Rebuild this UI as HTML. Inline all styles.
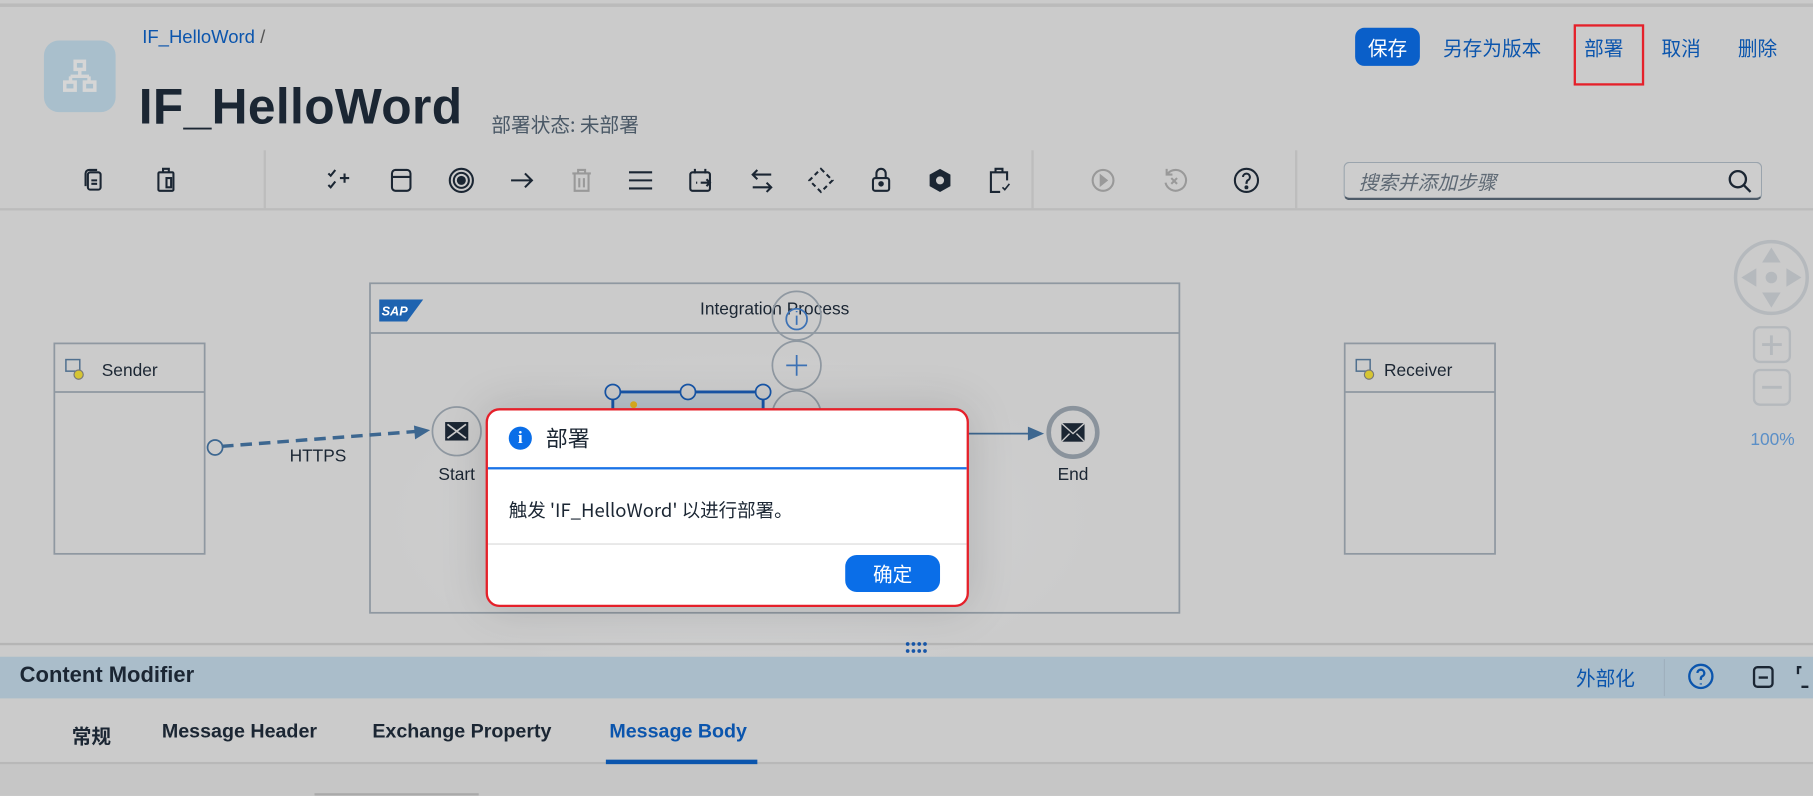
<!DOCTYPE html>
<html><head><meta charset="utf-8"><style>
html,body{margin:0;padding:0;width:1813px;height:796px;overflow:hidden;background:#cbcbcb}
#w{position:absolute;left:0;top:0;width:1568px;height:688px;transform:scale(1.15625);transform-origin:0 0;font-family:"Liberation Sans","Noto Sans CJK SC",sans-serif;background:#cbcbcb}
.a{position:absolute;white-space:nowrap}
.cn{font-family:"Noto Sans CJK SC","Liberation Sans",sans-serif}
.hl{position:absolute;left:0;width:1568px;height:2px;background:#bcbcbc}
.vl{position:absolute;width:2px;background:#bdbdbd}
.lnk{color:#0b55ad;font-size:17px}
</style></head><body><div id="w">
<div class="hl" style="top:3px;height:3px;background:#bbb"></div>
<div class="a" style="left:38px;top:35px;width:62px;height:62px;border-radius:13px;background:#a9bfcc"></div>
<svg class="a" style="left:53px;top:50px" width="32" height="32" viewBox="0 0 32 32" fill="none" stroke="#d6d6d6" stroke-width="3"><rect x="12" y="3" width="8" height="7"/><path d="M16 10v6M8 16h16M8 16v5M24 16v5"/><rect x="3" y="21" width="9" height="7"/><rect x="20" y="21" width="9" height="7"/></svg>
<div class="a" style="left:123px;top:24px;font-size:16px;color:#0b55ad">IF_HelloWord <span style="color:#555">/</span></div>
<div class="a" style="left:120px;top:69px;font-size:43px;font-weight:bold;color:#1b2633;letter-spacing:0.3px">IF_HelloWord</div>
<div class="a cn" style="left:425px;top:94px;font-size:17px;color:#4a5866">部署状态: 未部署</div>
<div class="a cn" style="left:1172px;top:24px;width:56px;height:33px;border-radius:8px;background:#0a5fc9;color:#fff;font-size:17px;line-height:33px;text-align:center">保存</div>
<div class="a cn lnk" style="left:1248px;top:28px">另存为版本</div>
<div class="a cn lnk" style="left:1370px;top:28px">部署</div>
<div class="a cn lnk" style="left:1437px;top:28px">取消</div>
<div class="a cn lnk" style="left:1503px;top:28px">删除</div>
<div class="a" style="left:1361px;top:21px;width:57px;height:49px;border:2px solid #e5202a"></div>
<div class="hl" style="top:180px"></div>
<div class="vl" style="left:228px;top:130px;height:50px"></div>
<div class="vl" style="left:892px;top:130px;height:50px"></div>
<div class="vl" style="left:1120px;top:130px;height:50px"></div>
<svg class="a" style="left:0;top:130px" width="1160" height="50" fill="none" stroke="#1b2633" stroke-width="1.8">
<g transform="translate(82,26)"><rect x="-6" y="-7" width="11" height="15" rx="2"/><path d="M-8 5v-11a3 3 0 0 1 3-3h7"/><path d="M-3 0h5M-3 3h5"/></g>
<g transform="translate(144,26)"><rect x="-7" y="-7" width="13" height="16" rx="1"/><path d="M-3-7v-3h5v3"/><rect x="0" y="-2" width="4" height="8"/></g>
<g transform="translate(293,26)"><path d="M-9-6l2 2 4-5M-9 4l2 2 4-5M1-2h8M5-6v8"/></g>
<g transform="translate(347,26)"><rect x="-8" y="-9" width="16" height="18" rx="3"/><path d="M-8-3h16"/></g>
<g transform="translate(399,26)"><circle r="10"/><circle r="6.5"/><circle r="3" fill="#1b2633"/></g>
<g transform="translate(451,26)"><path d="M-9 0h17M3-6l6 6-6 6"/></g>
<g transform="translate(503,26)" stroke="#999"><path d="M-8-6h16M-3-6v-3h6v3M-6-6v15h12v-15M-2-2v8M2-2v8"/></g>
<g transform="translate(554,26)"><path d="M-10-7h20M-10 0h20M-10 7h20"/></g>
<g transform="translate(606,26)"><rect x="-9" y="-7" width="17" height="16" rx="2"/><path d="M-5-10v4M4-10v4M-4 2h1M0 2h8M5-1l3 3-3 3"/></g>
<g transform="translate(659,26)"><path d="M8-5h-16M-4-9l-4 4 4 4M-8 6h16M4 2l4 4-4 4"/></g>
<g transform="translate(710,26)"><path d="M0-10l10 10-10 10-10-10z" stroke-dasharray="4 3"/></g>
<g transform="translate(762,26)"><rect x="-7" y="-2" width="14" height="11" rx="2"/><path d="M-4-2v-4a4 4 0 0 1 8 0v4"/><circle cy="3" r="1.5" fill="#1b2633"/></g>
<g transform="translate(813,26)" fill="#1b2633" stroke="none"><path d="M0-10l9 5v10l-9 5-9-5v-10z"/><circle r="3.5" fill="#cbcbcb"/></g>
<g transform="translate(864,26)"><path d="M-3-7h-4v17h8M3-7h4v7M-3-7v-3h6v3z"/><path d="M3 6l2 2 4-5" stroke-width="1.4"/></g>
<g transform="translate(954,26)" stroke="#999"><circle r="9"/><path d="M-2-4v8l5-4z" fill="#999"/></g>
<g transform="translate(1016,26)" stroke="#999"><path d="M-6-6a9 9 0 1 1-2 8M-7-10v5h5M-3-2l5 5M2-2l-5 5"/></g>
<g transform="translate(1078,26)"><circle r="10"/><path d="M-3-3a3 3 0 1 1 4 3c-1 1-1 2-1 3"/><circle cy="6" r="0.8" fill="#1b2633"/></g>
</svg>
<div class="a" style="left:1162px;top:140px;width:360px;height:30px;border:1px solid #9aa4ad;border-bottom:2px solid #4e5b68;border-radius:5px;background:#cdcdcd"></div>
<div class="a cn" style="left:1175px;top:144px;font-size:17px;font-style:italic;color:#5e6974">搜索并添加步骤</div>
<svg class="a" style="left:1494px;top:146px" width="22" height="22" fill="none" stroke="#1b2633" stroke-width="2"><circle cx="9" cy="9" r="7"/><path d="M14 14l6 6"/></svg>

<div class="a" style="left:330px;top:300px;width:620px;height:300px;background:radial-gradient(ellipse at center,#d3d4d6 0%,#cbcbcb 70%)"></div>
<svg class="a" style="left:0;top:180px" width="1568" height="380" fill="none">
<rect x="320" y="65" width="700" height="285" stroke="#8f98a1" stroke-width="1.5"/>
<path d="M320 108h700" stroke="#8f98a1" stroke-width="1.5"/>
<path d="M328 79h38l-14 19h-24z" fill="#1e63b0"/>
<text x="330" y="93" font-size="11" font-weight="bold" font-style="italic" fill="#fff" font-family="Liberation Sans">SAP</text>
<text x="670" y="92" font-size="15" fill="#1b2633" text-anchor="middle" font-family="Liberation Sans">Integration Process</text>
<rect x="47" y="117" width="130" height="182" stroke="#8f98a1" stroke-width="1.5"/><path d="M47 159h130" stroke="#8f98a1" stroke-width="1.5"/>
<rect x="1163" y="117" width="130" height="182" stroke="#8f98a1" stroke-width="1.5"/><path d="M1163 159h130" stroke="#8f98a1" stroke-width="1.5"/>
<g stroke="#50708f" stroke-width="1.3"><rect x="57" y="131" width="12" height="10"/><rect x="1173" y="131" width="12" height="10"/></g>
<circle cx="68" cy="144" r="4" fill="#d6c532" stroke="#777"/><circle cx="1184" cy="144" r="4" fill="#d6c532" stroke="#777"/>
<text x="88" y="145" font-size="15" fill="#1b2633" font-family="Liberation Sans">Sender</text>
<text x="1197" y="145" font-size="15" fill="#1b2633" font-family="Liberation Sans">Receiver</text>
<path d="M192 206L362 193" stroke="#3d6790" stroke-width="3" stroke-dasharray="10 6"/>
<path d="M358 188l14 4-13 8z" fill="#3d6790"/>
<circle cx="186" cy="207" r="6.5" fill="#cbcbcb" stroke="#3d6790" stroke-width="1.5"/>
<text x="275" y="219" font-size="15" fill="#1b2633" text-anchor="middle" font-family="Liberation Sans">HTTPS</text>
<circle cx="395" cy="193" r="21" fill="#cbcbcb" stroke="#8f98a1" stroke-width="1.5"/>
<rect x="385" y="185" width="20" height="16" fill="#1b2633"/><path d="M387 187l16 12M403 187l-16 12" stroke="#cbcbcb" stroke-width="1.5"/>
<text x="395" y="235" font-size="15" fill="#1b2633" text-anchor="middle" font-family="Liberation Sans">Start</text>
<path d="M836 195h60" stroke="#3d6790" stroke-width="1.5"/><path d="M889 189l14 6-14 6z" fill="#3d6790"/>
<circle cx="928" cy="194" r="21" fill="#cbcbcb" stroke="#8a939c" stroke-width="4"/>
<rect x="918" y="186" width="20" height="16" fill="#1b2633"/><path d="M918 186l10 9 10-9M918 202l7-7M938 202l-7-7" stroke="#cbcbcb" stroke-width="1.2"/>
<text x="928" y="235" font-size="15" fill="#1b2633" text-anchor="middle" font-family="Liberation Sans">End</text>
<g stroke="#8f98a1" stroke-width="1.5"><circle cx="689" cy="93" r="21"/><circle cx="689" cy="136" r="21"/><circle cx="689" cy="179" r="21"/></g>
<circle cx="689" cy="96" r="9" stroke="#3d72b5" stroke-width="1.5"/><path d="M689 93v8M689 89v1" stroke="#3d72b5" stroke-width="1.5"/>
<path d="M680 136h18M689 127v18" stroke="#3d72b5" stroke-width="1.5"/>
<rect x="530" y="159" width="130" height="30" fill="#b9c3cb"/>
<path d="M530 159h130M530 159v30M660 159v30" stroke="#1756a8" stroke-width="2.5"/>
<g fill="#cbcbcb" stroke="#1756a8" stroke-width="1.5"><circle cx="530" cy="159" r="6.5"/><circle cx="595" cy="159" r="6.5"/><circle cx="660" cy="159" r="6.5"/></g>
<circle cx="548" cy="170" r="3" fill="#e0b020"/>
<circle cx="1532" cy="60" r="31" stroke="#b5b9bd" stroke-width="3"/>
<g fill="#b5b9bd"><path d="M1532 34l8 13h-16zM1532 86l8-13h-16zM1506 60l13-8v16zM1558 60l-13-8v16z"/><circle cx="1532" cy="60" r="5"/></g>
<rect x="1517" y="103" width="31" height="30" rx="5" stroke="#b5b9bd" stroke-width="2"/><path d="M1524 118h17M1532 110v17" stroke="#b5b9bd" stroke-width="2.5"/>
<rect x="1517" y="140" width="31" height="30" rx="5" stroke="#b5b9bd" stroke-width="2"/><path d="M1524 155h17" stroke="#b5b9bd" stroke-width="2.5"/>
<text x="1533" y="205" font-size="15" fill="#5b8fc7" text-anchor="middle" font-family="Liberation Sans">100%</text>
</svg>
<div class="hl" style="top:556px;height:2px;background:#b5b5b5"></div>
<svg class="a" style="left:782px;top:553px" width="22" height="14" fill="#1756a8"><circle cx="3" cy="4" r="1.6"/><circle cx="8" cy="4" r="1.6"/><circle cx="13" cy="4" r="1.6"/><circle cx="18" cy="4" r="1.6"/><circle cx="3" cy="10" r="1.6"/><circle cx="8" cy="10" r="1.6"/><circle cx="13" cy="10" r="1.6"/><circle cx="18" cy="10" r="1.6"/></svg>
<div class="a" style="left:0;top:568px;width:1568px;height:36px;background:#aabdca"></div>
<div class="a" style="left:17px;top:574px;font-size:19px;font-weight:bold;color:#1b2633">Content Modifier</div>
<div class="a cn" style="left:1363px;top:573px;font-size:17px;color:#0b55ad">外部化</div>
<div class="vl" style="left:1439px;top:570px;height:32px;width:1px;background:#9fb0bd"></div>
<svg class="a" style="left:1458px;top:573px" width="110" height="26" fill="none" stroke="#0b55ad" stroke-width="2"><circle cx="13" cy="12" r="10"/><path d="M10 9a3 3 0 1 1 4 3c-1 .6-1 1.5-1 3M13 18v1"/><rect x="59" y="4" width="16" height="17" rx="3" stroke="#1b2633"/><path d="M63 13h8" stroke="#1b2633"/><path d="M100 4h-3v6M100 21h6" stroke="#1b2633"/></svg>
<div class="a cn" style="left:62px;top:623px;font-size:17px;font-weight:bold;color:#1b2633">常规</div>
<div class="a" style="left:140px;top:623px;font-size:17px;font-weight:bold;color:#1b2633">Message Header</div>
<div class="a" style="left:322px;top:623px;font-size:17px;font-weight:bold;color:#1b2633">Exchange Property</div>
<div class="a" style="left:527px;top:623px;font-size:17px;font-weight:bold;color:#0b55ad">Message Body</div>
<div class="hl" style="top:659px;height:2px;background:#b8b8b8"></div>
<div class="a" style="left:524px;top:657px;width:131px;height:4px;background:#0b55ad"></div>
<div class="a" style="left:0;top:661px;width:1568px;height:27px;background:#c6c6c6"></div>
<div class="a" style="left:272px;top:686px;width:142px;height:2px;background:#aaa"></div>

<div class="a" style="left:420px;top:353px;width:414px;height:168px;border:2px solid #e5202a;background:#fff;border-radius:12px;overflow:hidden;box-shadow:0 0 40px rgba(0,0,0,.15)">
<div class="a" style="left:18px;top:14px;width:20px;height:20px;border-radius:50%;background:#0a6ee8;color:#fff;font-weight:bold;font-size:15px;text-align:center;line-height:20px;font-family:'Liberation Serif',serif">i</div>
<div class="a cn" style="left:50px;top:10px;font-size:19px;color:#1b2633">部署</div>
<div class="a" style="left:0;top:49px;width:414px;height:2px;background:#1a73e8"></div>
<div class="a cn" style="left:18px;top:73px;font-size:16px;color:#1b2633">触发 'IF_HelloWord' 以进行部署。</div>
<div class="a" style="left:0;top:115px;width:414px;height:1px;background:#d9d9d9"></div>
<div class="a cn" style="left:309px;top:125px;width:82px;height:32px;border-radius:10px;background:#0a6ee8;color:#fff;font-size:17px;line-height:32px;text-align:center">确定</div>
</div>
</div></body></html>
